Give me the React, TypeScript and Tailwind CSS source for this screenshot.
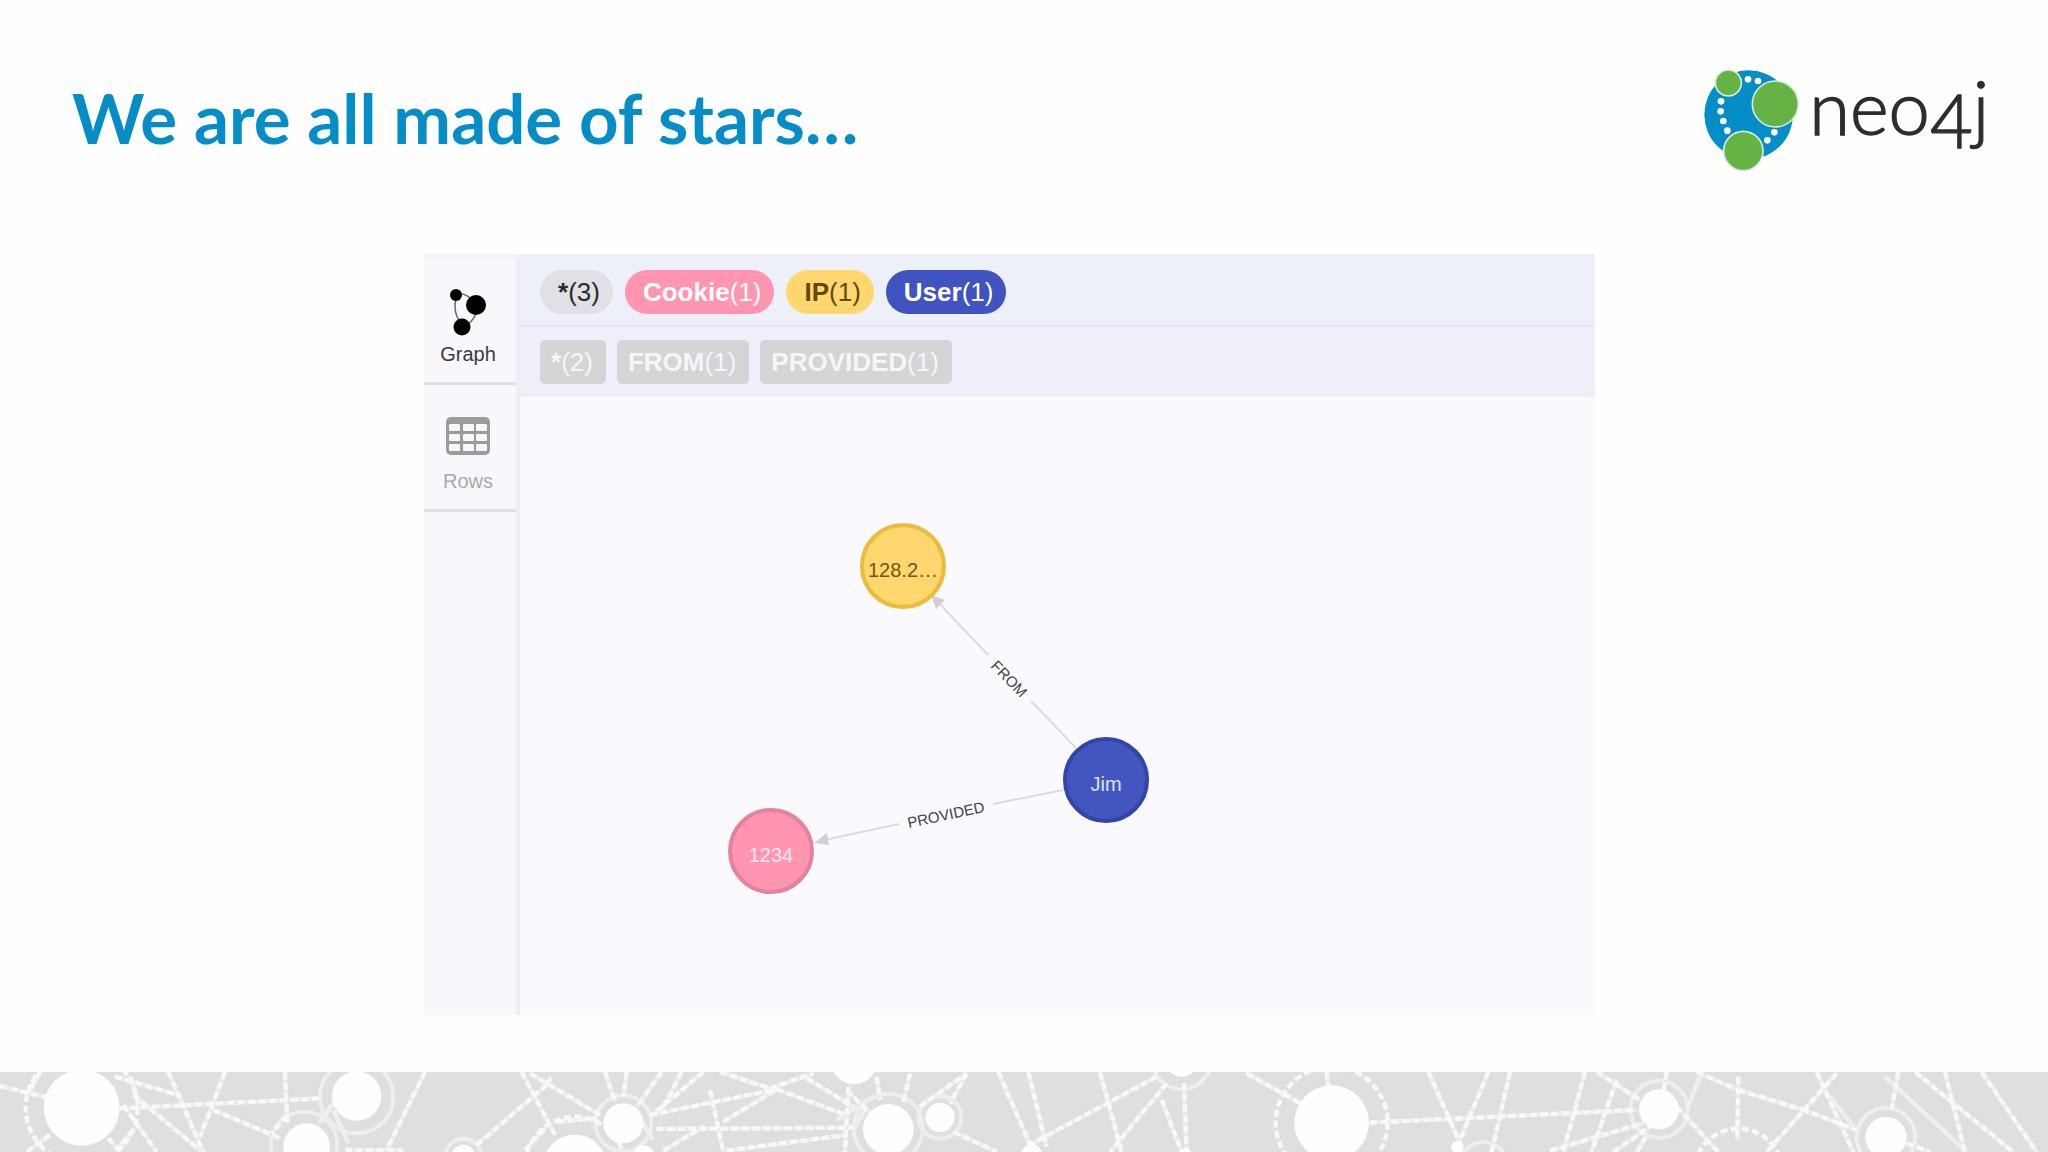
import { useState } from 'react';
import clsx from 'clsx';

type Segment = [number, number, number, number];
type Disc = [number, number, number];

const labels = [
  { name: '*', count: 3, style: 'bg-[#dfe1e6] text-[#2b2b2b]' },
  { name: 'Cookie', count: 1, style: 'bg-[#ff95b0] text-white' },
  { name: 'IP', count: 1, style: 'bg-[#ffd76e] text-[#604a0e]' },
  { name: 'User', count: 1, style: 'bg-[#4153c0] text-white' },
];

const relationships = [
  { name: '*', count: 2 },
  { name: 'FROM', count: 1 },
  { name: 'PROVIDED', count: 1 },
];

const nodes = [
  { id: 'ip', x: 383, y: 169, caption: '128.2…', fill: '#ffd76e', stroke: '#edba39', text: '#6f5618' },
  { id: 'user', x: 586, y: 383, caption: 'Jim', fill: '#4356c0', stroke: '#3445a8', text: '#dfe3fa' },
  { id: 'cookie', x: 251, y: 454, caption: '1234', fill: '#ff95b0', stroke: '#e5819d', text: '#ffeaf0' },
];

// footer artwork, three units to the pixel
const dashed: Segment[] = [
  [0, 78, 140, 112], [120, 36, 85, 100], [345, 50, 545, 108], [390, 50, 410, 110], [400, 105, 600, 270],
  [360, 145, 965, 115], [505, 36, 610, 276], [675, 36, 600, 230], [640, 150, 840, 235], [855, 36, 862, 190],
  [370, 135, 470, 276], [400, 210, 350, 270], [150, 225, 80, 276], [325, 235, 360, 276],
  [1275, 36, 1160, 270], [1035, 270, 1210, 272], [1430, 255, 1640, 75], [860, 165, 815, 220],
  [1565, 36, 1665, 225], [1590, 40, 1800, 165], [1640, 75, 1655, 50], [1575, 270, 1640, 200], [1670, 185, 1790, 175],
  [1815, 36, 1845, 125], [1880, 36, 1870, 110], [1985, 36, 1910, 140], [2045, 36, 1985, 150], [2110, 36, 1950, 170],
  [1950, 165, 2330, 88], [2130, 90, 2170, 276], [2170, 185, 2330, 88], [2160, 36, 2310, 85], [2310, 85, 2440, 40],
  [2330, 88, 2540, 165], [1970, 207, 2560, 203], [2180, 272, 2540, 225], [1990, 272, 2110, 200], [2420, 55, 2560, 140],
  [2545, 80, 2535, 276], [2630, 50, 2640, 120], [2730, 40, 2710, 130], [2760, 140, 2900, 40], [2900, 40, 2850, 130],
  [2860, 215, 2990, 276], [2995, 36, 3100, 276], [2540, 90, 2620, 170],
  [3085, 36, 3140, 260], [3300, 36, 3365, 276], [3470, 50, 3080, 260], [3500, 70, 3330, 276], [3485, 120, 3545, 276],
  [3552, 70, 3560, 276], [3740, 40, 3910, 135], [3980, 36, 3985, 80], [4110, 188, 4910, 150],
  [4285, 36, 4385, 260], [4465, 36, 4380, 240], [4530, 36, 4475, 276],
  [4755, 36, 4690, 276], [4850, 60, 4775, 276], [4790, 36, 4920, 120], [4650, 272, 4930, 190], [4840, 276, 4950, 200],
  [5000, 36, 4990, 100], [5030, 140, 5155, 276], [5090, 36, 5215, 90], [5215, 90, 5405, 148], [5405, 148, 5570, 210],
  [5215, 50, 5212, 240], [5510, 40, 5300, 276], [5450, 36, 5560, 276], [5695, 36, 5675, 150], [5745, 36, 6040, 276],
  [5835, 36, 5895, 276], [5945, 36, 6110, 276], [5720, 250, 5790, 276], [4910, 276, 4940, 225],
];

const faint: Segment[] = [
  [5655, 50, 5900, 276], [5490, 110, 5560, 200], [5100, 50, 5060, 150], [960, 190, 1030, 80], [1000, 150, 1045, 250],
  [2510, 180, 2620, 110], [2560, 210, 2600, 140], [1900, 150, 1960, 240],
];

const discs: Disc[] = [
  [245, 143, 114], [1070, 108, 74], [920, 260, 70], [1390, 290, 36],
  [1725, 320, 96], [1870, 190, 60], [2562, 5, 68], [2665, 208, 76], [2820, 172, 44], [1930, 290, 34],
  [3545, 0, 50], [3995, 188, 112], [3095, 285, 32], [3555, 285, 20], [4372, 262, 18],
  [4977, 148, 60], [5658, 232, 62],
];

const solidRings: Disc[] = [
  [1070, 110, 110], [912, 255, 100], [1390, 290, 54], [1870, 190, 84], [2665, 205, 104], [2820, 172, 64],
  [3545, 0, 88], [4450, 320, 74], [4977, 148, 86], [5658, 232, 88],
];

const dashedRings: Disc[] = [[245, 143, 168], [3995, 188, 168], [5215, 340, 134], [1725, 320, 150]];

function Logo() {
  return (
    <svg className="h-[140px] w-[300px]" viewBox="60 0 900 420" role="img" aria-label="neo4j">
      <circle cx="206" cy="194" r="133" fill="#058dc7" />
      <g fill="#fff">
        <circle cx="204" cy="88" r="10" />
        <circle cx="234" cy="93" r="10" />
        <circle cx="123" cy="154" r="10" />
        <circle cx="122" cy="184" r="10" />
        <circle cx="130" cy="213" r="10" />
        <circle cx="142" cy="242" r="10" />
        <circle cx="262" cy="271" r="10" />
        <circle cx="283" cy="247" r="10" />
      </g>
      <g fill="#65b344" stroke="#d8ecdf" strokeWidth="5">
        <circle cx="145" cy="99" r="39" />
        <circle cx="286" cy="162" r="69" />
        <circle cx="190" cy="303" r="59" />
      </g>
      <text x="388" y="255" fontSize="222" className="font-['Lato'] font-light" fill="#2d2d2d" stroke="#2d2d2d" strokeWidth="4">
        neo<tspan dy="38">4</tspan><tspan dy="-38">j</tspan>
      </text>
    </svg>
  );
}

function GraphIcon() {
  return (
    <svg className="h-12 w-[38px]" viewBox="0 0 38 48">
      <path d="M8 8 Q2 24 14 38 M8 6 Q18 4 27 16 M28 18 Q27 34 14 38" fill="none" stroke="#666" strokeWidth="1.5" />
      <circle cx="7" cy="7" r="6" />
      <circle cx="27" cy="17" r="10" />
      <circle cx="13" cy="39" r="8.5" />
    </svg>
  );
}

function RowsIcon() {
  return (
    <svg className="h-[38px] w-11" viewBox="0 0 44 38">
      <rect width="44" height="38" rx="5" fill="#9b9b9d" />
      <g fill="#f8f8fc">
        {[7, 17, 27].map((y) => [3, 17, 30].map((x) => <rect key={`${x}-${y}`} x={x} y={y} width="11" height="7" rx="1" />))}
      </g>
    </svg>
  );
}

function GraphCanvas() {
  return (
    <svg className="w-full flex-1" viewBox="0 0 1075 618" preserveAspectRatio="xMinYMin meet">
      <g stroke="#dcdce0" strokeWidth="2">
        <path d="M556 351 L511 304 M468 258 L416 203" />
        <path d="M543 393 L473 407 M379 427 L304 443" />
      </g>
      <g fill="#d0d0d3">
        <path d="M411 198 L425 203 L416 212 Z" />
        <path d="M294 446 L307 436 L309 448 Z" />
      </g>
      <g className="font-['Liberation_Sans',sans-serif]" fontSize="15" fill="#404044" textAnchor="middle">
        <text transform="translate(489 282) rotate(46)" dy="5">FROM</text>
        <text transform="translate(426 418) rotate(-12)" dy="5">PROVIDED</text>
      </g>
      {nodes.map((n) => (
        <g key={n.id}>
          <circle cx={n.x} cy={n.y} r="41" fill={n.fill} stroke={n.stroke} strokeWidth="4" />
          <text x={n.x} y={n.y + 11} className="font-['Liberation_Sans',sans-serif]" fontSize="20" fill={n.text} textAnchor="middle">
            {n.caption}
          </text>
        </g>
      ))}
    </svg>
  );
}

function NetworkBand() {
  return (
    <svg className="h-full w-full" viewBox="0 36 6144 240" preserveAspectRatio="xMinYMin slice">
      <g stroke="#edeef0" strokeWidth="14">
        {faint.map(([x1, y1, x2, y2], i) => <line key={i} x1={x1} y1={y1} x2={x2} y2={y2} />)}
      </g>
      <g stroke="#eeeeec" strokeWidth="12" fill="none">
        {solidRings.map(([cx, cy, r], i) => <circle key={i} cx={cx} cy={cy} r={r} />)}
      </g>
      <g stroke="#ebebe9" strokeWidth="13" fill="none">
        {dashed.map(([x1, y1, x2, y2], i) => <line key={i} x1={x1} y1={y1} x2={x2} y2={y2} />)}
      </g>
      <g stroke="#f8f8f5" strokeWidth="13" strokeDasharray="22 10" fill="none">
        {dashed.map(([x1, y1, x2, y2], i) => <line key={i} x1={x1} y1={y1} x2={x2} y2={y2} />)}
        {dashedRings.map(([cx, cy, r], i) => <circle key={i} cx={cx} cy={cy} r={r} />)}
      </g>
      <g fill="#fefefe">
        {discs.map(([cx, cy, r], i) => <circle key={i} cx={cx} cy={cy} r={r} />)}
      </g>
    </svg>
  );
}

export default function App() {
  const [view, setView] = useState('graph');

  return (
    <div className="flex min-h-screen flex-col bg-[#fefefe]">
      <header className="flex h-[254px] items-start justify-between pt-[50px] pr-[48px] pl-[72px]">
        <h1 className="font-['Lato',sans-serif] text-[69px] leading-[136px] font-bold text-[#058dc7]">We are all made of stars…</h1>
        <Logo />
      </header>

      <main className="mr-[453px] mb-[57px] ml-[424px] flex flex-1 bg-[#f9f9fe] font-['Liberation_Sans',sans-serif]">
        <nav className="flex w-24 shrink-0 flex-col border-t-[6px] border-r-4 border-t-[#f3f3f7] border-r-[#eeeff6] bg-[#f8f8fc] text-[20px] leading-6">
          <button
            type="button"
            onClick={() => setView('graph')}
            className={clsx('flex h-[125px] flex-col items-center justify-end gap-1.5 border-b-[3px] border-[#dfdfe4] pr-1 pb-4', view === 'graph' ? 'text-[#3b3b3d]' : 'text-[#a9a9ac]')}
          >
            <GraphIcon />
            Graph
          </button>
          <button
            type="button"
            onClick={() => setView('rows')}
            className={clsx('flex h-[127px] flex-col items-center justify-end gap-3.5 border-b-[3px] border-[#dfdfe4] pr-1 pb-4', view === 'rows' ? 'text-[#3b3b3d]' : 'text-[#a9a9ac]')}
          >
            <RowsIcon />
            Rows
          </button>
        </nav>

        <section className="flex min-w-0 flex-1 flex-col">
          <div className="flex h-[73px] items-center gap-3 border-b-2 border-[#e6e9f3] bg-[#edf0f9] pt-[4px] pl-5">
            {labels.map((l) => (
              <button key={l.name} type="button" className={clsx('h-11 rounded-full pr-[13px] pl-[18px] text-[26px] leading-[44px]', l.style)}>
                <b>{l.name}</b>({l.count})
              </button>
            ))}
          </div>
          <div className="flex h-[70px] items-center gap-[11px] bg-[#eeeff9] pl-5">
            {relationships.map((r) => (
              <button key={r.name} type="button" className="h-11 rounded-[5px] bg-[#d3d5d7] pr-[13px] pl-[11px] text-[26px] leading-[44px] text-[#f6f6f8]">
                <b>{r.name}</b>({r.count})
              </button>
            ))}
          </div>
          <GraphCanvas />
        </section>
      </main>

      <footer className="h-20 overflow-hidden bg-[#e0dfdd]">
        <NetworkBand />
      </footer>
    </div>
  );
}
